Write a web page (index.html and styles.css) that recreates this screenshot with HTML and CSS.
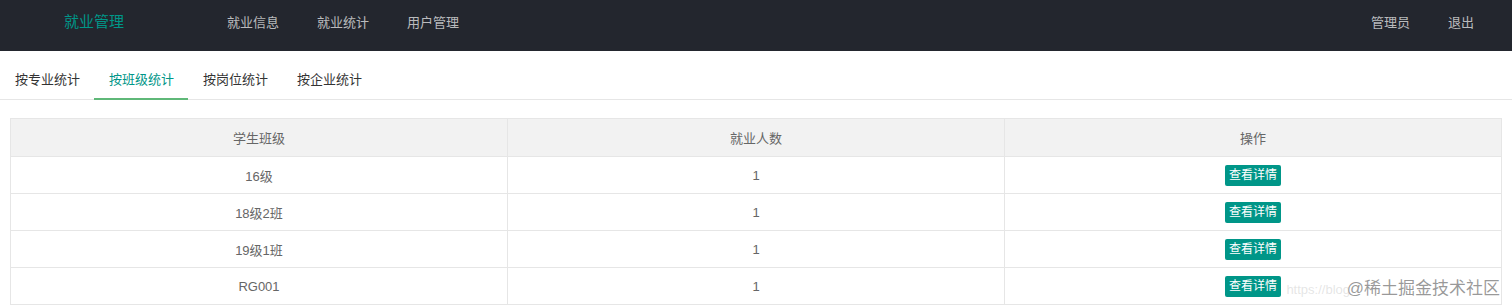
FILE: index.html
```html
<!DOCTYPE html>
<html lang="zh-CN">
<head>
    <meta charset="UTF-8">
    <meta name="viewport" content="width=device-width, initial-scale=1.0">
    <title>就业管理</title>
    <link rel="stylesheet" href="styles.css">
</head>
<body>

    <!-- Top header -->
    <div class="header">
        <div class="logo">就业管理</div>
        <ul class="nav">
            <li>就业信息</li>
            <li>就业统计</li>
            <li>用户管理</li>
        </ul>
        <ul class="nav nav-right">
            <li>管理员</li>
            <li>退出</li>
        </ul>
    </div>

    <!-- Statistic tabs -->
    <ul class="tab-title">
        <li>按专业统计</li>
        <li class="this">按班级统计</li>
        <li>按岗位统计</li>
        <li>按企业统计</li>
    </ul>

    <div class="content">
        <table class="data-table">
            <thead>
                <tr>
                    <th>学生班级</th>
                    <th>就业人数</th>
                    <th>操作</th>
                </tr>
            </thead>
            <tbody>
                <tr>
                    <td>16级</td>
                    <td>1</td>
                    <td><button class="btn-xs">查看详情</button></td>
                </tr>
                <tr>
                    <td>18级2班</td>
                    <td>1</td>
                    <td><button class="btn-xs">查看详情</button></td>
                </tr>
                <tr>
                    <td>19级1班</td>
                    <td>1</td>
                    <td><button class="btn-xs">查看详情</button></td>
                </tr>
                <tr>
                    <td>RG001</td>
                    <td>1</td>
                    <td><button class="btn-xs">查看详情</button></td>
                </tr>
            </tbody>
        </table>

        <div class="watermark">
            <span class="wm-url">https://blog</span>
            <span class="wm-main">@稀土掘金技术社区</span>
        </div>
    </div>

</body>
</html>
```

FILE: styles.css
```css
body {
    margin: 0;
    font-family: "Liberation Sans", "Noto Sans CJK SC", sans-serif;
    font-size: 13px;
    color: #333;
    background: #fff;
}
ul {
    list-style: none;
    margin: 0;
    padding: 0;
}

/* header */
.header {
    display: flex;
    align-items: flex-start;
    height: 51px;
    background-color: #23262e;
}
.logo {
    padding-left: 64px;
    width: 144px;
    line-height: 44px;
    font-size: 15px;
    color: #009688;
}
.nav {
    display: flex;
}
.nav li {
    padding: 0 19px;
    line-height: 46px;
    color: rgba(255, 255, 255, 0.7);
    font-size: 13px;
}
.nav-right {
    margin-left: auto;
    margin-right: 19px;
}

/* tabs */
.tab-title {
    display: flex;
    margin-top: 10px;
    height: 38px;
    border-bottom: 1px solid #e6e6e6;
}
.tab-title li {
    padding: 0 14px 0 15px;
    line-height: 38px;
    height: 37px;
    font-size: 13px;
    color: #333;
    border-bottom: 2px solid transparent;
}
.tab-title li.this {
    color: #009688;
    border-bottom-color: #5fb878;
}

/* table */
.content {
    position: relative;
    padding: 18px 10px 0;
}
.data-table {
    width: 100%;
    border-collapse: collapse;
    table-layout: fixed;
    color: #666;
}
.data-table th,
.data-table td {
    border: 1px solid #e6e6e6;
    text-align: center;
    font-weight: normal;
    padding: 0;
}
.data-table th {
    height: 37px;
    background-color: #f2f2f2;
}
.data-table td {
    height: 36px;
}
.btn-xs {
    height: 21px;
    line-height: 21px;
    padding: 0 4px;
    border: none;
    border-radius: 2px;
    background-color: #009688;
    color: #fff;
    font-family: inherit;
    font-size: 12px;
    vertical-align: middle;
}

.watermark {
    position: absolute;
    right: 12px;
    bottom: 6px;
    white-space: nowrap;
}
.wm-url {
    position: absolute;
    right: 150px;
    bottom: 2px;
    font-size: 13px;
    color: rgba(180, 180, 180, 0.35);
}
.wm-main {
    font-size: 17px;
    color: rgba(120, 120, 120, 0.75);
}
```
